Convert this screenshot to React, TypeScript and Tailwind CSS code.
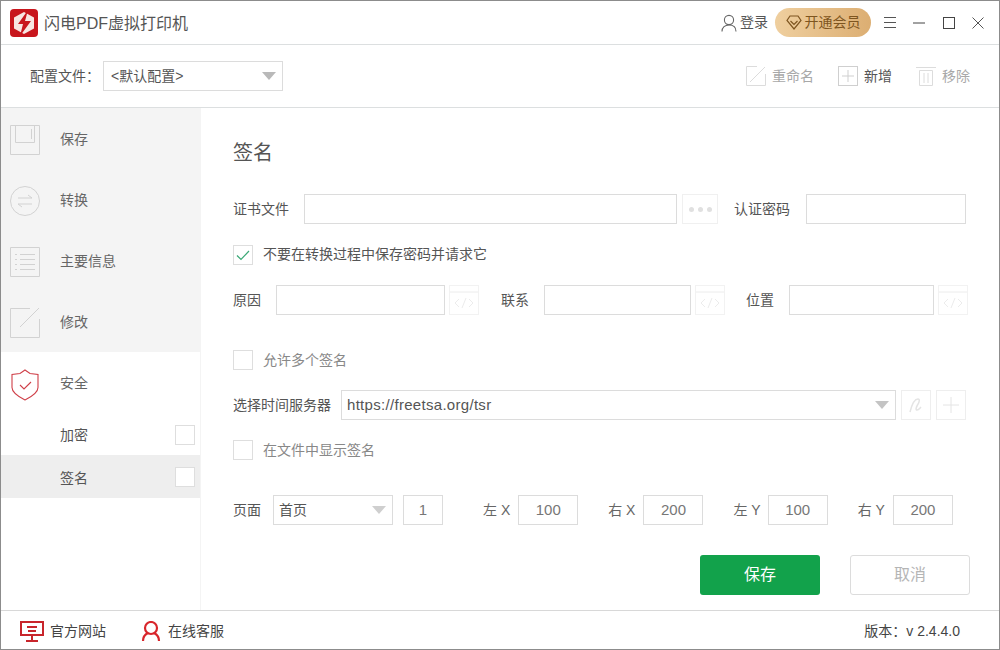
import { type ReactNode } from "react";

function Caret({ color = "#b9b9b9" }: { color?: string }) {
  return (
    <svg width="14" height="8" viewBox="0 0 14 8" className="shrink-0">
      <path d="M0 0h14L7 8z" fill={color} />
    </svg>
  );
}

function Input({ className, value }: { className: string; value?: string }) {
  return (
    <div
      className={`h-[30px] shrink-0 border border-[#dcdcdc] bg-white flex items-center justify-center text-[15px] text-[#777] ${className}`}
    >
      {value}
    </div>
  );
}

function CodeBtn({ className = "" }: { className?: string }) {
  return (
    <div className={`w-[30px] h-[30px] shrink-0 border border-[#f2f2f2] flex items-center justify-center ${className}`}>
      <svg width="28" height="28" viewBox="0 0 28 28" fill="none" stroke="#ececec" strokeWidth="1">
        <path d="M0 6h28" />
        <path d="M9 13l-4 4 4 4M19 13l4 4-4 4M16 12l-4 10" />
      </svg>
    </div>
  );
}

function Check({ checked, className = "" }: { checked?: boolean; className?: string }) {
  return (
    <div className={`w-5 h-5 shrink-0 border border-[#dedede] bg-white flex items-center justify-center ${className}`}>
      {checked && (
        <svg width="14" height="11" viewBox="0 0 14 11" fill="none" stroke="#3aa876" strokeWidth="1.2">
          <path d="M1 5.5l4 4 8-8.5" />
        </svg>
      )}
    </div>
  );
}

function Label({ children, className = "" }: { children: ReactNode; className?: string }) {
  return <span className={`text-[14px] text-[#555] leading-5 shrink-0 ${className}`}>{children}</span>;
}

function NavItem({ icon, label, className = "" }: { icon: ReactNode; label: string; className?: string }) {
  return (
    <div className={`h-[61px] flex items-center pl-[9px] ${className}`}>
      <div className="w-[30px] h-[30px] shrink-0">{icon}</div>
      <span className="ml-5 text-[14px] text-[#666]">{label}</span>
    </div>
  );
}

function Coord({
  label,
  value,
  className = "",
  inputClass = "ml-[8px]",
}: {
  label: string;
  value: string;
  className?: string;
  inputClass?: string;
}) {
  return (
    <div className={`flex items-center ${className}`}>
      <Label className="text-[#666]">{label}</Label>
      <Input className={`w-[60px] ${inputClass}`} value={value} />
    </div>
  );
}

export default function App() {
  return (
    <div
      className="w-[1000px] h-[650px] flex flex-col bg-white border border-[#8c8c8c] overflow-hidden"
      style={{ fontFamily: '"Liberation Sans", "Noto Sans CJK SC", sans-serif' }}
    >
      {/* title bar */}
      <div className="h-[44px] shrink-0 flex items-center border-b border-[#dcdfe0] pl-[9px] pr-[15px]">
        <svg width="28" height="28" viewBox="0 0 28 28" className="shrink-0">
          <rect width="28" height="28" rx="4" fill="#c8161d" />
          <path d="M14 3l10 5.500v11L14 25 4 19.500v-11z" fill="#f8e6e2" />
          <path d="M18 1L8 15h5l-3 12 11-15h-6z" fill="#c8161d" />
        </svg>
        <span className="ml-[6px] pt-[2px] text-[16px] text-[#555]">闪电PDF虚拟打印机</span>
        <div className="ml-auto flex items-center">
          <svg width="16" height="18" viewBox="0 0 16 18" fill="none" stroke="#666" strokeWidth="1.1">
            <circle cx="8" cy="6" r="4.6" />
            <path d="M1 17.5c0-4.2 3-6.500 7-6.500s7 2.300 7 6.500" />
          </svg>
          <span className="ml-[3px] text-[14px] text-[#555]">登录</span>
          <div className="ml-[7px] w-[96px] h-[29px] rounded-full bg-gradient-to-r from-[#efcf9f] to-[#dcae72] flex items-center justify-center gap-[3px]">
            <svg width="16" height="15" viewBox="0 0 16 15" fill="none" stroke="#7e5520" strokeWidth="1.2">
              <path d="M4 1h8l3 4.500-7 8.500-7-8.500z" />
              <path d="M4.500 6L8 9.500 11.500 6" />
            </svg>
            <span className="text-[14px] text-[#7e5520]">开通会员</span>
          </div>
          <svg width="12" height="11" viewBox="0 0 12 11" stroke="#555" className="ml-[13px]">
            <path d="M0 .5h12M0 5.500h12M0 10.500h12" />
          </svg>
          <svg width="12" height="2" viewBox="0 0 12 2" stroke="#444" className="ml-[17px]">
            <path d="M0 1h12" />
          </svg>
          <svg width="12" height="12" viewBox="0 0 12 12" fill="none" stroke="#444" className="ml-[18px]">
            <rect x=".5" y=".5" width="11" height="11" />
          </svg>
          <svg width="12" height="12" viewBox="0 0 12 12" stroke="#555" className="ml-[17px]">
            <path d="M.5.500l11 11M11.500.500l-11 11" />
          </svg>
        </div>
      </div>

      {/* profile bar */}
      <div className="h-[63px] shrink-0 flex items-center border-b border-[#dcdfe0] pl-[29px] pr-[29px]">
        <span className="text-[14px] text-[#555]">配置文件：</span>
        <div className="ml-[3px] w-[180px] h-[30px] border border-[#dcdcdc] flex items-center pl-[7px] pr-[6px] text-[14px] text-[#555]">
          <span>&lt;默认配置&gt;</span>
          <div className="ml-auto">
            <Caret />
          </div>
        </div>
        <div className="ml-auto flex items-center">
          <svg width="20" height="20" viewBox="0 0 20 20" fill="none" stroke="#dcdcdc">
            <path d="M11 .500H.5v19h19V8" />
            <path d="M4 16L19 1" />
          </svg>
          <span className="ml-[6px] text-[14px] text-[#a8a8a8]">重命名</span>
          <svg width="20" height="20" viewBox="0 0 20 20" fill="none" stroke="#cfcfcf" className="ml-[24px]">
            <rect x=".5" y=".5" width="19" height="19" />
            <path d="M10 4v12M4 10h12" />
          </svg>
          <span className="ml-[6px] text-[14px] text-[#555]">新增</span>
          <svg width="20" height="20" viewBox="0 0 20 20" fill="none" stroke="#dcdcdc" className="ml-[24px]">
            <path d="M0 1.500h20M3.500 4.500h13v15h-13zM8 7v10M12 7v10" />
          </svg>
          <span className="ml-[6px] text-[14px] text-[#a8a8a8]">移除</span>
        </div>
      </div>

      <div className="flex-1 min-h-0 flex">
        {/* sidebar */}
        <div className="w-[200px] shrink-0 flex flex-col border-r border-[#f4f4f4]">
          <div className="bg-[#f4f4f4] h-[244px] pt-[1px]">
            <NavItem
              label="保存"
              icon={
                <svg width="30" height="30" viewBox="0 0 30 30" fill="none" stroke="#d2d2d2">
                  <path d="M.5.500h29v29H.5zM5.500.500v17h19V.500M21.500 4v10" />
                </svg>
              }
            />
            <NavItem
              label="转换"
              icon={
                <svg width="30" height="30" viewBox="0 0 30 30" fill="none" stroke="#d2d2d2">
                  <circle cx="15" cy="15" r="14.500" />
                  <path d="M8 12h14l-4-3M22 18H8l4 3" />
                </svg>
              }
            />
            <NavItem
              label="主要信息"
              icon={
                <svg width="30" height="30" viewBox="0 0 30 30" fill="none" stroke="#d2d2d2">
                  <path d="M.5.500h29v29H.5zM5 7.500h2M10 7.500h15M5 12.500h2M10 12.500h15M5 17.500h2M10 17.500h15M5 22.500h2M10 22.500h15" />
                </svg>
              }
            />
            <NavItem
              label="修改"
              icon={
                <svg width="30" height="30" viewBox="0 0 30 30" fill="none" stroke="#d2d2d2">
                  <path d="M20 .500H.5v29h29V11" />
                  <path d="M10 19L29 0" />
                </svg>
              }
            />
          </div>
          <NavItem
            label="安全"
            className="mt-[1px]"
            icon={
              <svg width="30" height="32" viewBox="0 0 30 32" fill="none" stroke="#cf3f48" strokeWidth="1.1">
                <path d="M15 1l5 3.500 8 1v13c0 5-6 9-13 12.500C8 27.500 2 23.500 2 18.500v-13l8-1z" />
                <path d="M10 16l4 4 7-7" />
              </svg>
            }
          />
          <div className="h-[41px] flex items-center pl-[59px] pr-[5px]">
            <span className="pt-[2px] text-[14px] text-[#555]">加密</span>
            <Check className="ml-auto" />
          </div>
          <div className="h-[43px] flex items-center pl-[59px] pr-[5px] bg-[#eeeeee]">
            <span className="pt-[4px] text-[14px] text-[#555]">签名</span>
            <Check className="ml-auto" />
          </div>
        </div>

        {/* form */}
        <div className="flex-1 min-w-0 pl-[32px] pt-[31px]">
          <div className="text-[20px] leading-[28px] text-[#555]">签名</div>

          <div className="mt-[27px] flex items-center">
            <Label>证书文件</Label>
            <Input className="w-[373px] ml-[15px]" />
            <div className="ml-[5px] w-[36px] h-[30px] border border-[#f0f0f0] flex items-center justify-center gap-[4px]">
              <span className="w-[5px] h-[5px] rounded-full bg-[#e0e0e0]" />
              <span className="w-[5px] h-[5px] rounded-full bg-[#e0e0e0]" />
              <span className="w-[5px] h-[5px] rounded-full bg-[#e0e0e0]" />
            </div>
            <Label className="ml-[16px]">认证密码</Label>
            <Input className="w-[160px] ml-[16px]" />
          </div>

          <div className="mt-[21px] flex items-center">
            <Check checked />
            <Label className="ml-[10px] leading-[18px] mb-[2px]">不要在转换过程中保存密码并请求它</Label>
          </div>

          <div className="mt-[20px] flex items-center">
            <Label>原因</Label>
            <Input className="w-[169px] ml-[15px]" />
            <CodeBtn className="ml-[4px]" />
            <Label className="ml-[22px]">联系</Label>
            <Input className="w-[147px] ml-[15px]" />
            <CodeBtn className="ml-[4px]" />
            <Label className="ml-[21px]">位置</Label>
            <Input className="w-[145px] ml-[15px]" />
            <CodeBtn className="ml-[4px]" />
          </div>

          <div className="mt-[35px] flex items-center">
            <Check />
            <Label className="ml-[10px] text-[#888]">允许多个签名</Label>
          </div>

          <div className="mt-[20px] flex items-center">
            <Label>选择时间服务器</Label>
            <div className="ml-[10px] w-[555px] h-[30px] border border-[#dcdcdc] flex items-center pl-[5px] pr-[6px] text-[15px] text-[#555]">
              <span className="tracking-[0.3px]">https://freetsa.org/tsr</span>
              <div className="ml-auto">
                <Caret color="#c4c4c4" />
              </div>
            </div>
            <div className="ml-[5px] w-[30px] h-[30px] border border-[#eeeeee] flex items-center justify-center">
              <svg width="18" height="18" viewBox="0 0 18 18" fill="none" stroke="#e4e4e4" strokeWidth="1.5">
                <path d="M3 16C5 8 8 3 11 3c2 0 1.500 3-.5 6-1.500 2.500-2 5-.5 5s3-2 4-3" />
              </svg>
            </div>
            <div className="ml-[5px] w-[30px] h-[30px] border border-[#eeeeee] flex items-center justify-center">
              <svg width="16" height="16" viewBox="0 0 16 16" stroke="#e4e4e4">
                <path d="M8 0v16M0 8h16" />
              </svg>
            </div>
          </div>

          <div className="mt-[20px] flex items-center">
            <Check />
            <Label className="ml-[10px] text-[#888]">在文件中显示签名</Label>
          </div>

          <div className="mt-[35px] flex items-center">
            <Label>页面</Label>
            <div className="ml-[12px] w-[120px] h-[30px] border border-[#dcdcdc] flex items-center pl-[5px] pr-[6px] text-[14px] text-[#555]">
              <span>首页</span>
              <div className="ml-auto">
                <Caret color="#cfcfcf" />
              </div>
            </div>
            <Input className="w-[40px] ml-[10px]" value="1" />
            <Coord label="左 X" value="100" className="ml-[40px]" />
            <Coord label="右 X" value="200" className="ml-[30px]" />
            <Coord label="左 Y" value="100" className="ml-[30px]" inputClass="ml-[7px]" />
            <Coord label="右 Y" value="200" className="ml-[30px]" />
          </div>

          <div className="mt-[30px] flex justify-end pr-[29px] gap-[30px]">
            <div className="w-[120px] h-[40px] rounded-[3px] bg-[#12a24b] flex items-center justify-center text-[16px] text-white">
              保存
            </div>
            <div className="w-[120px] h-[40px] rounded-[3px] border border-[#dcdcdc] flex items-center justify-center text-[16px] text-[#b5b5b5]">
              取消
            </div>
          </div>
        </div>
      </div>

      {/* footer */}
      <div className="h-[39px] shrink-0 border-t border-[#d8d8d8] flex items-center pt-[2px] pl-[19px] pr-[39px]">
        <svg width="24" height="21" viewBox="0 0 24 21" fill="none" stroke="#c8252b" strokeWidth="2">
          <path d="M1 1h22v13H1zM7 6h10M8 10h8M12 14v5M6 20h12" />
        </svg>
        <span className="ml-[6px] text-[14px] text-[#444]">官方网站</span>
        <svg width="20" height="21" viewBox="0 0 20 21" fill="none" stroke="#d8262c" strokeWidth="2.200" className="ml-[35px]">
          <circle cx="10" cy="7" r="6" />
          <path d="M2 20c0-5 3-7 5-8M18 20c0-5-3-7-5-8" />
        </svg>
        <span className="ml-[7px] text-[14px] text-[#444]">在线客服</span>
        <span className="ml-auto text-[14px] text-[#444]">版本：v 2.4.4.0</span>
      </div>
    </div>
  );
}
